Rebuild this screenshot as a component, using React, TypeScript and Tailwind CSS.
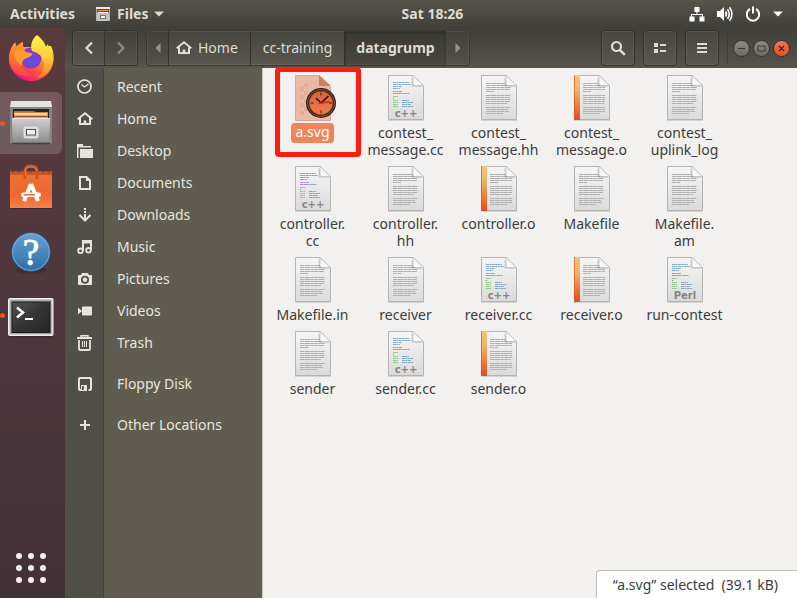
import React from "react";

type Kind = "text" | "cpp" | "perl" | "object" | "svg";
type FileEntry = { label: string; kind: Kind; selected?: boolean };

const files: FileEntry[] = [
  { label: "a.svg", kind: "svg", selected: true },
  { label: "contest_\nmessage.cc", kind: "cpp" },
  { label: "contest_\nmessage.hh", kind: "text" },
  { label: "contest_\nmessage.o", kind: "object" },
  { label: "contest_\nuplink_log", kind: "text" },
  { label: "controller.\ncc", kind: "cpp" },
  { label: "controller.\nhh", kind: "text" },
  { label: "controller.o", kind: "object" },
  { label: "Makefile", kind: "text" },
  { label: "Makefile.\nam", kind: "text" },
  { label: "Makefile.in", kind: "text" },
  { label: "receiver", kind: "text" },
  { label: "receiver.cc", kind: "cpp" },
  { label: "receiver.o", kind: "object" },
  { label: "run-contest", kind: "perl" },
  { label: "sender", kind: "text" },
  { label: "sender.cc", kind: "cpp" },
  { label: "sender.o", kind: "object" },
];

/* ---------- file icons ---------- */

function SharedGradients() {
  return (
    <svg width="0" height="0" className="absolute" aria-hidden="true">
      <defs>
        <linearGradient id="paper" x1="0" y1="0" x2="0" y2="1">
          <stop offset="0" stopColor="#f6f6f6" />
          <stop offset="1" stopColor="#dadada" />
        </linearGradient>
        <linearGradient id="fold" x1="0" y1="1" x2="1" y2="0">
          <stop offset="0" stopColor="#ffffff" />
          <stop offset="0.5" stopColor="#f4f4f4" />
          <stop offset="1" stopColor="#b5b5b5" />
        </linearGradient>
        <linearGradient id="strip" x1="0" y1="0" x2="0" y2="1">
          <stop offset="0" stopColor="#f2c57c" />
          <stop offset="0.35" stopColor="#efb264" />
          <stop offset="1" stopColor="#ea4a1b" />
        </linearGradient>
        <linearGradient id="clockFace" x1="0" y1="0" x2="0" y2="1">
          <stop offset="0" stopColor="#d9633c" />
          <stop offset="1" stopColor="#ee7b4c" />
        </linearGradient>
      </defs>
    </svg>
  );
}

function TextLines({ x }: { x: number }) {
  const right = [24, 24, 25, 24, 8, 25, 24, 25, 24, 21, 25, 22, 23, 17];
  const ys = [8, 10, 12, 14, 16, 20, 22, 24, 26, 28, 32, 34, 36, 38];
  return (
    <g stroke="#b0b0b0" strokeWidth="1" strokeDasharray="4 0.4 6 0.4 3 0.4">
      {ys.map((y, i) => (
        <line key={y} x1={x} x2={Math.min(x + right[i], 31)} y1={y + 0.5} y2={y + 0.5} />
      ))}
    </g>
  );
}

function CodeLines() {
  const rows: [number, number, number, string][] = [
    [5, 21, 7, "#83acc4"], [5, 23, 9, "#83acc4"], [5, 14, 11, "#83acc4"], [5, 12, 13, "#83acc4"],
    [5, 14, 16, "#b58acb"], [5, 10, 18, "#b58acb"], [10, 22, 18, "#83acc4"],
    [5, 10, 21, "#92ca8e"], [5, 6, 23, "#888888"],
    [5, 10, 25, "#92ca8e"], [14, 21, 25, "#83acc4"],
    [5, 10, 27, "#92ca8e"], [14, 25, 27, "#83acc4"],
    [5, 10, 29, "#92ca8e"], [14, 23, 29, "#83acc4"],
    [5, 10, 31, "#92ca8e"], [14, 25, 31, "#83acc4"],
  ];
  return (
    <g strokeWidth="1" strokeDasharray="3 0.4 2 0.4">
      {rows.map(([a, b, y, c]) => (
        <line key={`${a}-${y}`} x1={a} x2={b} y1={y + 0.5} y2={y + 0.5} stroke={c} />
      ))}
    </g>
  );
}

function FileIcon({ kind }: { kind: Kind }) {
  if (kind === "svg") {
    return (
      <svg width="48" height="48" viewBox="-6 0 48 48" aria-hidden="true">
        <path d="M.5.5H24l11.500 11.500V45.500H.5z" fill="#ebb9a6" stroke="#dfa48d" />
        <g fill="#e2ad98">
          {[8, 16, 24, 32].map((y) => (
            <g key={y}>
              <rect x="5" y={y + 4} width="4" height="4" />
              <rect x="9" y={y} width="4" height="4" />
            </g>
          ))}
        </g>
        <path d="M24 0v11h12z" fill="#cf8064" />
        <circle cx="26" cy="28" r="15" fill="#2e211b" />
        <circle cx="26" cy="28" r="13.500" fill="none" stroke="#865039" />
        <circle cx="26" cy="28" r="11.800" fill="url(#clockFace)" stroke="#9a4427" strokeWidth="0.6" />
        <path d="M26 17.500v3M26 35.500v3M15.500 28h3M34 28h3" stroke="#3a1d12" />
        <path d="M26 28l-5-5M26 28l7.500-7" stroke="#1c100b" strokeWidth="1.500" />
        <path d="M24 28.500l10.500-2" stroke="#f01c10" strokeWidth="1.300" />
      </svg>
    );
  }
  const code = kind === "cpp" || kind === "perl";
  return (
    <svg width="48" height="48" viewBox="-6 0 48 48" aria-hidden="true">
      <path d="M0 45.500h36" stroke="#000" strokeOpacity="0.12" />
      <path d="M.5.500H25l10.500 10V44.500H.5z" fill="url(#paper)" stroke="#b3b3b3" />
      {code ? <CodeLines /> : <TextLines x={kind === "object" ? 9 : 5} />}
      {kind === "object" && (
        <g>
          <rect width="6" height="45" fill="url(#strip)" />
          <path d="M.5 0v45" stroke="#c94f1e" strokeOpacity="0.6" />
        </g>
      )}
      <path d="M23.500 2v9.500l11 .5z" fill="#000" fillOpacity="0.15" />
      <path d="M25 .500v8q0 2 2 2h8.500z" fill="url(#fold)" stroke="#bdbdbd" strokeWidth="0.7" />
      {code && (
        <text x="18" y="42" textAnchor="middle" fontSize="10" fontWeight="700" fill="#858585" className="font-['DejaVu_Sans',sans-serif]">
          {kind === "cpp" ? "c++" : "Perl"}
        </text>
      )}
    </svg>
  );
}

/* ---------- symbolic icons, 16px grid ---------- */

function Glyph({ children }: { children: React.ReactNode }) {
  return (
    <svg width="16" height="16" viewBox="0 0 16 16" fill="none" stroke="currentColor" strokeWidth="2" className="shrink-0" aria-hidden="true">
      {children}
    </svg>
  );
}

const HomeGlyph = () => (
  <Glyph>
    <path d="M.7 8.200L8 2.200l7.300 6" />
    <path d="M3 7v6h10V7" />
    <path d="M8 9.500V13" strokeWidth="2.600" />
  </Glyph>
);

const places: { name: string; icon: React.ReactNode; spaced?: boolean }[] = [
  {
    name: "Recent",
    icon: (
      <Glyph>
        <circle cx="7.500" cy="7.500" r="6.500" strokeWidth="1.700" />
        <path d="M4.500 5.500L7.500 8l4-3" strokeWidth="1.200" />
      </Glyph>
    ),
  },
  { name: "Home", icon: <HomeGlyph /> },
  {
    name: "Desktop",
    icon: (
      <Glyph>
        <path d="M0 1h6v2h8v1.500H1.500V15H0z" fill="currentColor" stroke="none" />
        <path d="M3 6h13v9H3z" fill="currentColor" stroke="none" />
      </Glyph>
    ),
  },
  {
    name: "Documents",
    icon: (
      <Glyph>
        <path d="M3 2h6.500L13 5.500V14H3z" />
        <path d="M9 1v5h5z" fill="currentColor" stroke="none" />
      </Glyph>
    ),
  },
  {
    name: "Downloads",
    icon: (
      <Glyph>
        <path d="M8 1v2M8 4v2M8 7v6" />
        <path d="M2.500 8L8 13.500 13.500 8" />
      </Glyph>
    ),
  },
  {
    name: "Music",
    icon: (
      <Glyph>
        <path d="M6 12V2h8v9" />
        <path d="M6 3.500h8" />
        <circle cx="3.500" cy="11.800" r="2.300" strokeWidth="1.800" />
        <circle cx="11.500" cy="11.300" r="2.300" strokeWidth="1.800" />
      </Glyph>
    ),
  },
  {
    name: "Pictures",
    icon: (
      <Glyph>
        <path fillRule="evenodd" d="M5 2h6l1 2h2q1 0 1 1v8q0 1-1 1H2q-1 0-1-1V5q0-1 1-1h2zM8 4.800a4 4 0 100 8 4 4 0 000-8z" fill="currentColor" stroke="none" />
        <circle cx="8" cy="8.800" r="2.200" fill="currentColor" stroke="none" />
      </Glyph>
    ),
  },
  {
    name: "Videos",
    icon: (
      <Glyph>
        <path d="M6 3.500h8q1 0 1 1v7q0 1-1 1H6q-1 0-1-1v-7q0-1 1-1zM1 4.500L5 8l-4 3.500z" fill="currentColor" stroke="none" />
      </Glyph>
    ),
  },
  {
    name: "Trash",
    icon: (
      <Glyph>
        <path d="M0 3h15" />
        <path d="M4 2V.800h7V2" strokeWidth="1.400" />
        <path d="M2 5v9q0 1 1 1h9q1 0 1-1V5" strokeWidth="1.800" />
        <path d="M5.500 6v6M7.500 6v6M9.500 6v6" strokeWidth="1" />
      </Glyph>
    ),
  },
  {
    name: "Floppy Disk",
    spaced: true,
    icon: (
      <Glyph>
        <path d="M4.500 14H3q-1 0-1-1V3q0-1 1-1h10q1 0 1 1v10q0 1-1 1h-1.500" />
        <path fillRule="evenodd" d="M4 9h6v6H4zm1 1v4h1.800v-4z" fill="currentColor" stroke="none" />
      </Glyph>
    ),
  },
  {
    name: "Other Locations",
    spaced: true,
    icon: (
      <Glyph>
        <path d="M8 3v10M3 8h10" />
      </Glyph>
    ),
  },
];

/* ---------- dock icons, 62 x 64 slots ---------- */

const FirefoxArt = () => (
  <svg width="62" height="64" viewBox="0 0 62 64" aria-hidden="true">
    <defs>
      <linearGradient id="fxBody" x1="0.9" y1="0.1" x2="0.25" y2="0.95">
        <stop offset="0" stopColor="#ffe84a" />
        <stop offset="0.3" stopColor="#ffa62c" />
        <stop offset="0.6" stopColor="#ff5a3a" />
        <stop offset="1" stopColor="#e8128a" />
      </linearGradient>
      <radialGradient id="fxGlobe" cx="0.5" cy="0.7" r="0.7">
        <stop offset="0" stopColor="#5a55e0" />
        <stop offset="1" stopColor="#9330c9" />
      </radialGradient>
      <linearGradient id="fxTail" x1="0.5" y1="0" x2="0.5" y2="1">
        <stop offset="0" stopColor="#fff44f" />
        <stop offset="0.5" stopColor="#ffcf3a" />
        <stop offset="1" stopColor="#ff7a2a" />
      </linearGradient>
      <linearGradient id="fxHead" x1="0.5" y1="0" x2="0.4" y2="1">
        <stop offset="0" stopColor="#ffa02c" />
        <stop offset="0.6" stopColor="#ff6a33" />
        <stop offset="1" stopColor="#ff3d4f" />
      </linearGradient>
    </defs>
    <path d="M15 14.500c1 1.500 1.500 3 1.500 4.500 2-2.500 4-4 6.500-5-.5 2-.2 3.500.5 5h16L51 18c2 4 2.700 8 2.700 12 0 13-10 23-22.500 23S9 43 9 30.500c0-6.500 2.500-12 6-16z" fill="url(#fxBody)" />
    <path d="M15 14.500c1 1.500 1.500 3 1.500 4.500 2-2.500 4-4 6.500-5-.5 2-.2 3.500.5 5l2 8-4 12 10 9c-14 2-22-6-22.500-17 0-7 2.500-12.500 6-16.500z" fill="url(#fxHead)" />
    <circle cx="31" cy="30" r="10.500" fill="url(#fxGlobe)" />
    <path d="M37 7c6 5 8 8 9 12 1-1 1-2 1-3 5 5 7 13 5 21-2 7-8 12-15 13 7-5 9-13 5-20-2-4-6-6-10-7-2-6 0-12 5-16z" fill="url(#fxTail)" />
    <path d="M14 24c4-4 9-3 12 0l6.500 1.500c-1 3-4 4-7 5-3 1.500-4 4-3 7-4-1-8-6-8.500-13.500z" fill="#ff9a2c" />
  </svg>
);

const FilesArt = () => (
  <svg width="62" height="64" viewBox="0 0 62 64" aria-hidden="true">
    <defs>
      <linearGradient id="cabinet" x1="0" y1="0" x2="0" y2="1">
        <stop offset="0" stopColor="#cfcfcf" />
        <stop offset="1" stopColor="#8d8d8d" />
      </linearGradient>
    </defs>
    <rect x="10" y="12" width="42" height="40" rx="2" fill="#858585" />
    <path d="M11 9h40l1 6H10z" fill="#e3e3e3" />
    <rect x="13" y="17" width="36" height="12" fill="#242424" />
    <path d="M14 19h20l2 1h12v8H14z" fill="#d2602a" />
    <rect x="14" y="20.500" width="34" height="7" fill="#f29b4b" />
    <path d="M15 22h32" stroke="#fff0d2" strokeWidth="1.500" />
    <path d="M14 24.500h34" stroke="#ad4a20" />
    <path d="M12 26h38l-.5 24.500h-37z" fill="url(#cabinet)" />
    <path d="M12 26.500h38" stroke="#e8e8e8" />
    <rect x="24" y="35" width="14" height="11" rx="1.500" fill="#d6d6d6" stroke="#f0f0f0" strokeWidth="0.8" />
    <rect x="26.500" y="37.500" width="9" height="5.500" fill="#eeeeee" stroke="#555555" />
    <path d="M12 51.500h38" stroke="#484040" strokeWidth="1.500" />
  </svg>
);

const StoreArt = () => (
  <svg width="62" height="64" viewBox="0 0 62 64" aria-hidden="true">
    <defs>
      <linearGradient id="bag" x1="0" y1="0" x2="0" y2="1">
        <stop offset="0" stopColor="#e8733a" />
        <stop offset="0.65" stopColor="#f0672c" />
        <stop offset="1" stopColor="#f5824c" />
      </linearGradient>
    </defs>
    <path d="M10 15l3 2 3-2 3 2 3-2 3 2 3-2 3 2 3-2 3 2 3-2 3 2 3-2 3 2 3-2v37H10z" fill="url(#bag)" />
    <path d="M10 15h42v4H10z" fill="#be471c" fillOpacity="0.65" />
    <path d="M25 23v-8q0-5 6-5t6 5v8" fill="none" stroke="#d65321" strokeWidth="2.800" />
    <path d="M25.500 20v-5q0-4 5.500-4t5.500 4" fill="none" stroke="#f28b58" strokeWidth="0.8" />
    <path d="M31 28l-7 17M31 28l7 17" stroke="#fff" strokeWidth="4" />
    <rect x="21" y="36.500" width="20" height="4.500" rx="2" fill="#fff" />
    <path d="M24 38.800h11" stroke="#ef6b31" strokeWidth="1.500" />
    <path d="M10 52.500h42" stroke="#2e2024" strokeOpacity="0.6" />
  </svg>
);

const HelpArt = () => (
  <svg width="62" height="64" viewBox="0 0 62 64" aria-hidden="true">
    <defs>
      <linearGradient id="help" x1="0" y1="0" x2="0" y2="1">
        <stop offset="0" stopColor="#6aa3d3" />
        <stop offset="1" stopColor="#2c6ca5" />
      </linearGradient>
    </defs>
    <ellipse cx="31" cy="50" rx="16" ry="4" fill="#000" fillOpacity="0.15" />
    <circle cx="31" cy="32" r="19.300" fill="url(#help)" stroke="#245a8d" />
    <circle cx="31" cy="32" r="18.300" fill="none" stroke="#83b6de" strokeWidth="0.8" />
    <text x="31" y="45" textAnchor="middle" fontSize="37" fill="#fff" stroke="#fff" strokeWidth="0.8" className="font-['Liberation_Serif',serif]">?</text>
  </svg>
);

const TerminalArt = () => (
  <svg width="62" height="64" viewBox="0 0 62 64" aria-hidden="true">
    <defs>
      <linearGradient id="screen" x1="0" y1="0" x2="1" y2="1">
        <stop offset="0" stopColor="#555555" />
        <stop offset="0.5" stopColor="#343434" />
        <stop offset="1" stopColor="#262626" />
      </linearGradient>
    </defs>
    <rect x="8.500" y="14.500" width="44.500" height="37" rx="1" fill="#cfcfcf" stroke="#f0f0f0" />
    <rect x="10" y="16" width="41.500" height="34" fill="#a5a5a5" />
    <rect x="12" y="18" width="38" height="30.500" fill="url(#screen)" stroke="#1b1b1b" />
    <path d="M17 23.500l6 5-6 5" fill="none" stroke="#fff" strokeWidth="2.500" />
    <path d="M25 35h8" stroke="#fff" strokeWidth="2" />
    <path d="M9 53h44" stroke="#221a1e" strokeOpacity="0.6" />
  </svg>
);

const dock = [
  { name: "Firefox", art: <FirefoxArt /> },
  { name: "Files", art: <FilesArt />, running: true, focused: true },
  { name: "Software", art: <StoreArt /> },
  { name: "Help", art: <HelpArt /> },
  { name: "Terminal", art: <TerminalArt />, running: true },
];

/* ---------- bars ---------- */

function TopBar() {
  return (
    <header className="grid h-7 shrink-0 grid-cols-[1fr_auto_1fr] items-center bg-linear-to-b from-[#57544b] to-[#403f3a] font-bold text-[#dfdbd2]">
      <div className="flex items-center gap-5 pl-2.5">
        <button type="button">Activities</button>
        <button type="button" className="flex items-center gap-1.5">
          <svg width="16" height="16" viewBox="0 0 16 16" aria-hidden="true">
            <rect x="1" y="1" width="14" height="14" rx="1" fill="#a9a9a9" />
            <path d="M1 1h14v2H1z" fill="#e9e9e9" />
            <path d="M2 3h12v4H2z" fill="#5a2a16" />
            <path d="M2.500 4.500h11" stroke="#f08a48" strokeWidth="1.500" />
            <path d="M2.500 6.500h11" stroke="#fff" />
            <path d="M1.500 7.500h13V15h-13z" fill="#c4c4c4" />
            <rect x="5.500" y="9.500" width="5" height="3" fill="#ededed" stroke="#777" />
          </svg>
          <span>Files</span>
          <svg width="10" height="6" viewBox="0 0 10 6" fill="currentColor" aria-hidden="true"><path d="M0 .500h10L5 5.500z" /></svg>
        </button>
      </div>
      <button type="button" className="pl-[68px]">Sat 18:26</button>
      <button type="button" aria-label="System menu" className="flex items-center gap-3 justify-self-end pr-3.5 text-white">
        <svg width="16" height="16" viewBox="0 0 16 16" fill="currentColor" aria-hidden="true">
          <path d="M5.500 1h5v5H8.500v2H14v2.500h1.500v5h-5v-5H13V9H3v1.500h2.500v5h-5v-5H2V8h5.500V6h-2z" />
        </svg>
        <svg width="16" height="16" viewBox="0 0 16 16" fill="none" stroke="currentColor" aria-hidden="true">
          <path d="M0 5h3l4-4v14l-4-4H0z" fill="currentColor" stroke="none" />
          <path d="M8.500 5.500q1.800 2.500 0 5" strokeWidth="1.800" />
          <path d="M10.500 3.300q3.500 4.700 0 9.400" strokeWidth="1.600" />
          <path d="M12.500 1.300q5 6.700 0 13.400" strokeWidth="1.500" />
        </svg>
        <svg width="16" height="16" viewBox="0 0 16 16" fill="none" stroke="currentColor" strokeWidth="2" aria-hidden="true">
          <path d="M5 3a6.200 6.200 0 106 0M8 .5v7" />
        </svg>
        <svg width="10" height="6" viewBox="0 0 10 6" fill="currentColor" aria-hidden="true"><path d="M0 .500h10L5 5.500z" /></svg>
      </button>
    </header>
  );
}

function Dock() {
  return (
    <nav aria-label="Dock" className="flex w-[65px] shrink-0 flex-col justify-between bg-linear-to-b from-[#593b3d] via-[#4f363d] to-[#423137]">
      <ul>
        {dock.map((d) => (
          <li key={d.name} className="relative h-16">
            {d.focused && <span className="absolute top-0 left-0 h-[62px] w-[62px] rounded-r-md bg-white/17" />}
            <button type="button" aria-label={d.name} className="relative block">{d.art}</button>
            {d.running && <span className="absolute top-[29px] left-0 h-[5px] w-[5px] rounded-full bg-[#e95420]" />}
          </li>
        ))}
      </ul>
      <button type="button" aria-label="Show Applications" className="grid grid-cols-3 gap-1.5 self-start pb-[15px] pl-4">
        {Array.from({ length: 9 }, (_, i) => (
          <span key={i} className="h-1.5 w-1.5 rounded-full bg-[#f2f0ef]" />
        ))}
      </button>
    </nav>
  );
}

function ToolButton({ label, children }: { label: string; children: React.ReactNode }) {
  return (
    <button type="button" aria-label={label} className="flex h-9 w-[34px] items-center justify-center rounded border border-[#33322e] bg-white/3 shadow-[inset_0_0_0_1px_rgba(255,255,255,0.07)]">
      {children}
    </button>
  );
}

function HeaderBar() {
  return (
    <div className="flex h-10 shrink-0 items-center bg-linear-to-b from-[#403f3a] to-[#56534a] pr-[7px] pl-[7px] text-[#dfdbd2]">
      <div className="flex h-9 overflow-hidden rounded border border-[#33322e] shadow-[inset_0_0_0_1px_rgba(255,255,255,0.07)]">
        <button type="button" aria-label="Back" className="flex w-8 items-center justify-center border-r border-[#35342f] bg-white/3">
          <svg width="16" height="16" viewBox="0 0 16 16" fill="none" stroke="currentColor" strokeWidth="2.200" aria-hidden="true"><path d="M11 2.500L5.500 8l5.500 5.500" /></svg>
        </button>
        <button type="button" aria-label="Forward" disabled className="flex w-8 items-center justify-center text-[#8e8b83]">
          <svg width="16" height="16" viewBox="0 0 16 16" fill="none" stroke="currentColor" strokeWidth="2.200" aria-hidden="true"><path d="M5 2.500L10.500 8 5 13.500" /></svg>
        </button>
      </div>
      <div className="ml-2 flex h-9 overflow-hidden rounded border border-[#3a3934] shadow-[inset_0_0_0_1px_rgba(255,255,255,0.07)]">
        <button type="button" aria-label="Scroll path left" className="flex w-[21px] items-center justify-center text-[#98958c]">
          <svg width="6" height="10" viewBox="0 0 6 10" fill="currentColor" aria-hidden="true"><path d="M5.500 0v10L.5 5z" /></svg>
        </button>
        <button type="button" className="flex w-[82px] items-center gap-1.5 border-l border-[#33322e] bg-white/3 pl-[7px]">
          <HomeGlyph />
          Home
        </button>
        <button type="button" className="w-[94px] border-l border-[#33322e] bg-white/3">cc-training</button>
        <button type="button" className="w-[102px] border-l border-[#2f2e2a] bg-black/12 font-bold shadow-[inset_0_1px_3px_rgba(0,0,0,0.35)]">datagrump</button>
        <button type="button" aria-label="Scroll path right" className="flex w-[23px] items-center justify-center text-[#98958c]">
          <svg width="6" height="10" viewBox="0 0 6 10" fill="currentColor" aria-hidden="true"><path d="M.5 0v10l5-5z" /></svg>
        </button>
      </div>
      <div className="ml-auto flex items-center gap-2">
        <ToolButton label="Search">
          <Glyph>
            <circle cx="6.500" cy="6.500" r="4.500" strokeWidth="2.200" />
            <path d="M9.800 9.800l5 5" strokeWidth="2.600" />
          </Glyph>
        </ToolButton>
        <ToolButton label="View options">
          <Glyph>
            <path d="M2 5h4M2 11h4" strokeWidth="4" />
            <path d="M8 5h6M8 11h6" />
          </Glyph>
        </ToolButton>
        <ToolButton label="Open menu">
          <Glyph>
            <path d="M3 4h10M3 8h10M3 12h10" />
          </Glyph>
        </ToolButton>
        <span className="h-[30px] w-px bg-[#3d3c37]" />
        <div className="-ml-[3px] flex gap-[3px]">
          <button type="button" aria-label="Minimize" className="h-[17px] w-[17px] rounded-full border border-[#35342f] bg-linear-to-b from-[#8e8b84] to-[#6c6962]">
            <svg width="15" height="15" viewBox="0 0 15 15" stroke="#3c3b37" aria-hidden="true"><path d="M4 7.500h7" /></svg>
          </button>
          <button type="button" aria-label="Maximize" className="h-[17px] w-[17px] rounded-full border border-[#35342f] bg-linear-to-b from-[#8e8b84] to-[#6c6962]">
            <svg width="15" height="15" viewBox="0 0 15 15" stroke="#3c3b37" fill="none" aria-hidden="true"><rect x="4" y="5" width="7" height="5" /></svg>
          </button>
          <button type="button" aria-label="Close" className="h-[17px] w-[17px] rounded-full border border-[#35342f] bg-linear-to-b from-[#f4744a] to-[#e2501f]">
            <svg width="15" height="15" viewBox="0 0 15 15" stroke="#3c2a20" strokeWidth="1.300" aria-hidden="true"><path d="M5 5l5 5M10 5l-5 5" /></svg>
          </button>
        </div>
      </div>
    </div>
  );
}

function Sidebar() {
  return (
    <nav aria-label="Places" className="w-[198px] shrink-0 border-r border-[#c9c5c1] bg-[linear-gradient(to_right,#505048_38px,#45453e_38px,#45453e_39px,#605d50_39px)] pt-[3px] text-[#e6e4df]">
      <ul>
        {places.map((p) => (
          <li key={p.name} className={p.spaced ? "mt-[9px]" : ""}>
            <a href="#" className="flex h-8 items-center gap-4 pl-3">
              {p.icon}
              <span className="pl-2">{p.name}</span>
            </a>
          </li>
        ))}
      </ul>
    </nav>
  );
}

function FileGrid() {
  return (
    <main className="relative min-w-0 flex-1 bg-[#f2f1f0] text-[#3c3c3c]">
      <ul className="grid grid-cols-[repeat(auto-fill,93px)] gap-y-2 pt-[7px] pl-[3px]">
        {files.map((f) => (
          <li key={f.label} className="relative">
            <button type="button" className="flex w-full flex-col items-center leading-[17px]">
              <FileIcon kind={f.kind} />
              {f.selected ? (
                <span className="rounded bg-[#f08459] px-1 pb-[3px] text-white">{f.label}</span>
              ) : (
                <span className="pt-px whitespace-pre-line">{f.label}</span>
              )}
            </button>
            {f.selected && (
              <span className="pointer-events-none absolute -top-2 left-[9px] h-[90px] w-[86px] rounded border-[5px] border-[#ff1c10]" />
            )}
          </li>
        ))}
      </ul>
      <p className="absolute right-0 bottom-0 flex h-7 items-center rounded-tl border-t border-l border-[#c0bdb9] bg-white pr-[19px] pl-4 whitespace-pre">
        “a.svg” selected  (39.1 kB)
      </p>
    </main>
  );
}

export default function App() {
  return (
    <div className="flex h-screen flex-col overflow-hidden font-['Noto_Sans',sans-serif] text-sm">
      <SharedGradients />
      <TopBar />
      <div className="flex min-h-0 flex-1">
        <Dock />
        <section aria-label="Files" className="flex min-w-0 flex-1 flex-col">
          <HeaderBar />
          <div className="flex min-h-0 flex-1">
            <Sidebar />
            <FileGrid />
          </div>
        </section>
      </div>
    </div>
  );
}
